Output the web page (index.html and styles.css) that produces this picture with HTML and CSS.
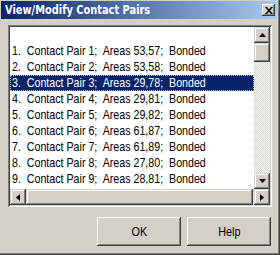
FILE: index.html
```html
<!DOCTYPE html>
<html>
<head>
<meta charset="utf-8">
<link rel="stylesheet" href="styles.css">
</head>
<body>
<div class="window">
  <div class="titlebar">
    <span class="title">View/Modify Contact Pairs</span>
    <span class="close"><svg width="8" height="7" viewBox="0 0 8 7"><path d="M0 0h2l2 2.5L6 0h2L5 3.5 8 7H6L4 4.5 2 7H0l3-3.5z" fill="#000"/></svg></span>
  </div>
  <div class="body">
    <div class="listbox">
      <div class="list-main">
        <div class="items">
          <div class="row"> </div>
          <div class="row"><span class="txt">1.  Contact Pair 1;  Areas 53,57;  Bonded</span></div>
          <div class="row"><span class="txt">2.  Contact Pair 2;  Areas 53,58;  Bonded</span></div>
          <div class="row selected"><span class="txt">3.  Contact Pair 3;  Areas 29,78;  Bonded</span></div>
          <div class="row"><span class="txt">4.  Contact Pair 4;  Areas 29,81;  Bonded</span></div>
          <div class="row"><span class="txt">5.  Contact Pair 5;  Areas 29,82;  Bonded</span></div>
          <div class="row"><span class="txt">6.  Contact Pair 6;  Areas 61,87;  Bonded</span></div>
          <div class="row"><span class="txt">7.  Contact Pair 7;  Areas 61,89;  Bonded</span></div>
          <div class="row"><span class="txt">8.  Contact Pair 8;  Areas 27,80;  Bonded</span></div>
          <div class="row"><span class="txt">9.  Contact Pair 9;  Areas 28,81;  Bonded</span></div>
        </div>
        <div class="vscroll">
          <div class="sbtn"><svg width="7" height="4" viewBox="0 0 7 4"><path d="M3.5 0L7 4H0z" fill="#000"/></svg></div>
          <div class="track vtrack"><div class="thumb vthumb"></div></div>
          <div class="sbtn"><svg width="7" height="4" viewBox="0 0 7 4"><path d="M0 0h7L3.5 4z" fill="#000"/></svg></div>
        </div>
      </div>
      <div class="hscroll">
        <div class="sbtn"><svg width="4" height="7" viewBox="0 0 4 7"><path d="M0 3.5L4 0v7z" fill="#000"/></svg></div>
        <div class="track htrack"><div class="thumb hthumb"></div></div>
        <div class="sbtn"><svg width="4" height="7" viewBox="0 0 4 7"><path d="M0 0l4 3.5L0 7z" fill="#000"/></svg></div>
      </div>
    </div>
    <div class="buttons">
      <button class="btn"><span class="btxt">OK</span></button>
      <button class="btn"><span class="btxt">Help</span></button>
    </div>
  </div>
</div>
</body>
</html>
```
FILE: styles.css
```css
html, body {
  margin: 0;
  padding: 0;
  background: #d4d0c8;
}
.window {
  width: 280px;
  height: 255px;
  box-sizing: border-box;
  padding: 1px 3px 3px 1px;
  background: #d4d0c8;
  box-shadow: inset -1px -1px #404040, inset -2px -2px #808080;
  display: flex;
  flex-direction: column;
}
.titlebar {
  height: 18px;
  background: linear-gradient(to right, #0a246a, #a6caf0);
  display: flex;
  align-items: center;
  justify-content: space-between;
  padding: 0 2px 0 4px;
}
.title {
  color: #fff;
  font-family: "DejaVu Sans", sans-serif;
  font-weight: bold;
  font-size: 12px;
  display: inline-block;
  transform: scaleX(0.82);
  transform-origin: left center;
  white-space: nowrap;
}
.close {
  width: 13px;
  height: 12px;
  background: #d4d0c8;
  box-shadow: inset -1px -1px #404040, inset 1px 1px #fff, inset -2px -2px #808080;
  display: flex;
  align-items: center;
  justify-content: center;
}
.body {
  flex: 1;
  padding: 6px 5px 0 7px;
  display: flex;
  flex-direction: column;
}
.listbox {
  width: 264px;
  height: 182px;
  box-sizing: border-box;
  padding: 2px;
  background: #fff;
  box-shadow: inset 1px 1px #808080, inset -1px -1px #fff, inset 2px 2px #404040, inset -2px -2px #d4d0c8;
  display: flex;
  flex-direction: column;
}
.list-main {
  height: 162px;
  display: flex;
}
.items {
  flex: 1;
  overflow: hidden;
  font-family: "Liberation Sans", Arial, sans-serif;
  font-size: 13px;
  color: #000;
}
.row {
  height: 16px;
  line-height: 16px;
  white-space: pre;
  padding-left: 2px;
}
.txt {
  display: inline-block;
  transform: scaleX(0.82);
  transform-origin: left center;
}
.row.selected {
  background: #0a246a;
  color: #fff;
  outline: 1px dotted #b8bcd8;
  outline-offset: -1px;
}
.vscroll {
  width: 16px;
  display: flex;
  flex-direction: column;
}
.hscroll {
  height: 16px;
  display: flex;
}
.sbtn {
  width: 16px;
  height: 16px;
  flex: none;
  background: #d4d0c8;
  box-shadow: inset -1px -1px #404040, inset 1px 1px #d4d0c8, inset -2px -2px #808080, inset 2px 2px #fff;
  display: flex;
  align-items: center;
  justify-content: center;
}
.track {
  flex: 1;
  background-color: #fff;
  background-image: repeating-conic-gradient(#d4d0c8 0 25%, #fff 0 50%);
  background-size: 2px 2px;
  display: flex;
}
.vtrack {
  flex-direction: column;
}
.thumb {
  background: #d4d0c8;
  box-shadow: inset -1px -1px #404040, inset 1px 1px #d4d0c8, inset -2px -2px #808080, inset 2px 2px #fff;
}
.vthumb {
  height: 19px;
}
.hthumb {
  flex: 1;
  margin-right: 1px;
}
.buttons {
  margin-top: 10px;
  display: flex;
  justify-content: flex-end;
  gap: 6px;
  padding-right: 1px;
}
.btn {
  width: 84px;
  height: 29px;
  margin: 0;
  padding: 0;
  border: none;
  background: #d4d0c8;
  box-shadow: inset -1px -1px #404040, inset 1px 1px #fff, inset -2px -2px #808080, inset 2px 2px #d4d0c8;
  font-family: "Liberation Sans", Arial, sans-serif;
  font-size: 13px;
  color: #000;
}
.btxt {
  display: inline-block;
  transform: scaleX(0.83);
}
```
